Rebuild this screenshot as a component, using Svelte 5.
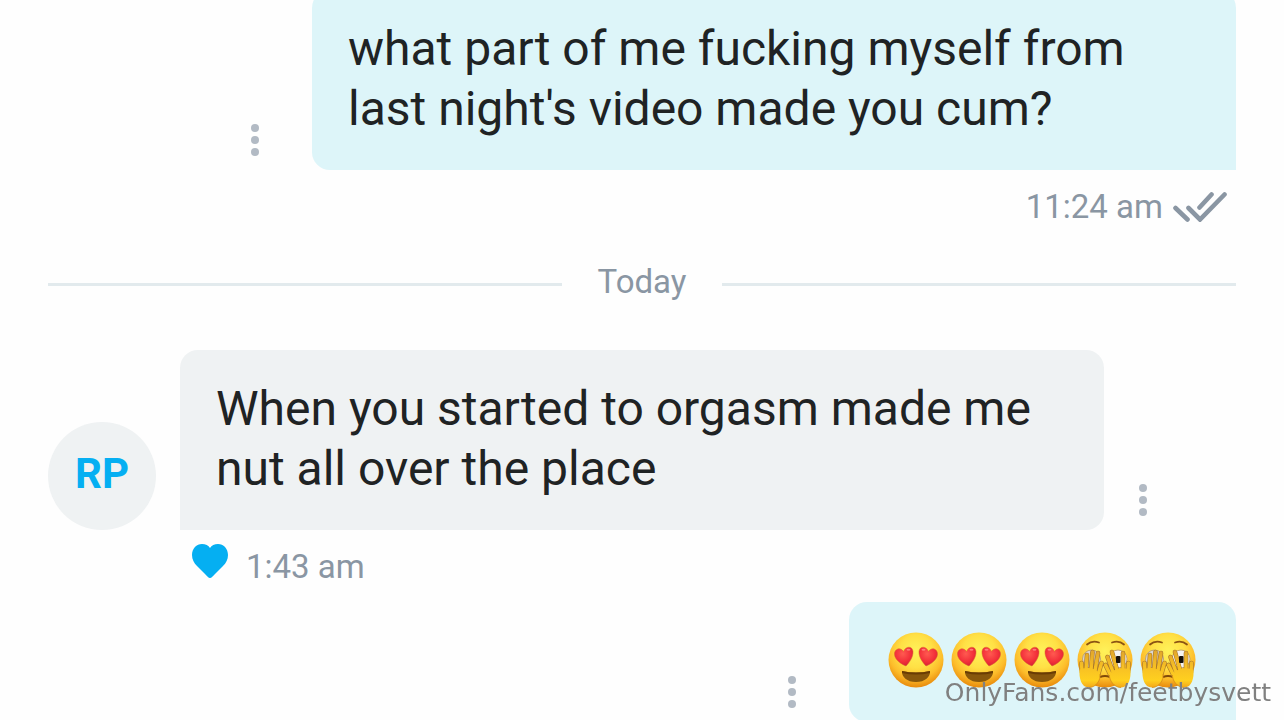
<script lang="ts">
  type Message = {
    id: number;
    from: 'me' | 'them';
    text?: string;
    emoji?: ('love' | 'peek')[];
    time?: string;
    liked?: boolean;
  };

  const earlier: Message[] = [
    {
      id: 1,
      from: 'me',
      text: "what part of me fucking myself from\nlast night's video made you cum?",
      time: '11:24 am'
    }
  ];

  const today: Message[] = [
    {
      id: 2,
      from: 'them',
      text: 'When you started to orgasm made me\nnut all over the place',
      time: '1:43 am',
      liked: true
    },
    { id: 3, from: 'me', emoji: ['love', 'love', 'love', 'peek', 'peek'] }
  ];

  const fingers =
    'M5 40L4.500 31M9 38L10 23M14 38L15.500 20M18 39L21 21M21 43L24.500 31M51 40L51.500 31M46 38L46 21M40 38L35 20M36 40L30.500 25M34 44L28.500 33';
</script>

<svg class="defs" aria-hidden="true">
  <defs>
    <radialGradient id="face" cx="0.5" cy="0.34" r="0.66">
      <stop offset="0" stop-color="#fff25a" />
      <stop offset="0.45" stop-color="#ffe045" />
      <stop offset="0.75" stop-color="#fdbd2b" />
      <stop offset="1" stop-color="#e88a0c" />
    </radialGradient>
    <linearGradient id="hand" x1="0" y1="18" x2="0" y2="56" gradientUnits="userSpaceOnUse">
      <stop offset="0" stop-color="#e0a52c" />
      <stop offset="0.45" stop-color="#f7c024" />
      <stop offset="0.8" stop-color="#ffd01f" />
      <stop offset="1" stop-color="#f2a51a" />
    </linearGradient>
    <radialGradient id="love" cx="0.45" cy="0.35" r="0.7">
      <stop offset="0" stop-color="#ff5a50" />
      <stop offset="0.6" stop-color="#f3303a" />
      <stop offset="1" stop-color="#d01f35" />
    </radialGradient>
  </defs>
</svg>

{#snippet loveFace()}
  <svg class="emoji" viewBox="0 0 56 56" role="img" aria-label="heart eyes">
    <circle cx="28" cy="28" r="27.500" fill="url(#face)" />
    <g fill="url(#love)" stroke="#d9662a" stroke-width="0.500">
      <path d="M18 34C13 32 7 28 6.500 22.500C6 17 12.500 14.500 15.500 19.500C17.500 14 24.500 13.500 25 19.500C25.400 25 21 31 18 34Z" />
      <path d="M38 34C43 32 49 28 49.500 22.500C50 17 43.500 14.500 40.500 19.500C38.500 14 31.500 13.500 31 19.500C30.600 25 35 31 38 34Z" />
    </g>
    <g fill="#ff9d8e" opacity="0.7">
      <ellipse cx="20.500" cy="17.800" rx="2" ry="1" />
      <ellipse cx="35.500" cy="17.800" rx="2" ry="1" />
    </g>
    <path d="M14 39Q28 42 42 39C42.500 45 37 50 28 50S13.500 45 14 39Z" fill="#87570c" />
    <path d="M14 39Q28 42 42 39L42 41Q28 44 14 41Z" fill="#693c04" />
  </svg>
{/snippet}

{#snippet peekFace()}
  <svg class="emoji" viewBox="0 0 56 56" role="img" aria-label="peeking through fingers">
    <circle cx="28" cy="28" r="27.500" fill="url(#face)" />
    <g fill="none" stroke="#8b5413" stroke-width="1.800" stroke-linecap="round">
      <path d="M10 12.500Q15 8 22 10.500" />
      <path d="M35 10.500Q42 8 47 12.500" />
    </g>
    <ellipse cx="14.500" cy="27" rx="9" ry="9" fill="#dcd8d2" stroke="#b3946c" stroke-width="0.800" />
    <ellipse cx="41" cy="27" rx="9" ry="9" fill="#f5f3f1" stroke="#b3946c" stroke-width="0.800" />
    <path d="M23 45Q28 43 33 45" fill="none" stroke="#804a09" stroke-width="2" />
    <g stroke-linecap="round" fill="none">
      <path d={fingers} stroke="#a8762a" stroke-width="4.600" />
      <path d={fingers} stroke="url(#hand)" stroke-width="3.400" />
    </g>
    <rect x="39" y="24" width="4.500" height="7" rx="1" fill="#17110d" />
    <g fill="url(#hand)">
      <path d="M2.500 38C6 35 19 35 22.500 42C24 48 19 55.500 12 55.500C4 55.500 2 46 2.500 38Z" />
      <path d="M53.500 38C50 35 36 35 32.500 43C32 48 37 55.500 44 55.500C52 55.500 54 46 53.500 38Z" />
    </g>
    <g fill="none" stroke="#d68d17" stroke-width="0.800">
      <path d="M23 42C24 48 19 55.500 12 55.500" />
      <path d="M32.500 43C32 48 37 55.500 44 55.500" />
    </g>
  </svg>
{/snippet}

{#snippet menu()}
  <button class="menu" aria-label="Message options">
    <svg viewBox="0 0 8 32" width="8" height="32">
      <circle cx="4" cy="4" r="4" />
      <circle cx="4" cy="16" r="4" />
      <circle cx="4" cy="28" r="4" />
    </svg>
  </button>
{/snippet}

{#snippet message(msg: Message)}
  <article class="message {msg.from}">
    <div class="row">
      {#if msg.from === 'them'}
        <div class="avatar">RP</div>
      {:else}
        {@render menu()}
      {/if}
      <div class="bubble" class:fit={msg.emoji}>
        {#if msg.emoji}
          <div class="emojis">
            {#each msg.emoji as kind}
              {#if kind === 'love'}{@render loveFace()}{:else}{@render peekFace()}{/if}
            {/each}
          </div>
        {:else}
          <p>{msg.text}</p>
        {/if}
      </div>
      {#if msg.from === 'them'}
        {@render menu()}
      {/if}
    </div>
    {#if msg.time}
      <footer>
        {#if msg.liked}
          <button class="like" aria-label="Unlike">
            <svg viewBox="0 0 36 34" width="36" height="34">
              <path d="M18 34C16.500 34 15 32 13 30L5 22C2 19 0 15.500 0 11C0 4.500 4.500 0 10 0C13.500 0 16.500 1.500 18 4C19.500 1.500 22.500 0 26 0C31.500 0 36 4.500 36 11C36 15.500 34 19 31 22L23 30C21 32 19.500 34 18 34Z" />
            </svg>
          </button>
        {/if}
        <time>{msg.time}</time>
        {#if msg.from === 'me'}
          <svg class="ticks" viewBox="0 0 54 32" width="54" height="32" role="img" aria-label="Read">
            <path d="M2.500 18L14.500 29.500M15.500 18L27 29.500L51.500 4.500M26.500 17.500L38.500 4.500" />
          </svg>
        {/if}
      </footer>
    {/if}
  </article>
{/snippet}

<main>
  {#each earlier as msg (msg.id)}
    {@render message(msg)}
  {/each}
  <div class="day"><span>Today</span></div>
  {#each today as msg (msg.id)}
    {@render message(msg)}
  {/each}
</main>
<div class="watermark">OnlyFans.com/feetbysvett</div>

<style>
  :global(body) {
    background: #fefefe;
    overflow: hidden;
  }

  .defs {
    position: absolute;
    width: 0;
    height: 0;
  }

  /* scrolled slightly past the top of the first bubble */
  main {
    margin-top: -10px;
    padding: 0 48px;
    font-family: Roboto, sans-serif;
    color: #1f2324;
  }

  .row {
    display: flex;
    align-items: flex-end;
  }

  .me .row {
    justify-content: flex-end;
    padding-left: 150px;
  }

  .them .row {
    padding-right: 54px;
  }

  .bubble {
    flex: 1;
    box-sizing: border-box;
    padding: 29px 36px 31px;
    border-radius: 18px;
  }

  .bubble.fit {
    flex: none;
    padding: 30px 36px;
  }

  .me .bubble {
    background: #ddf5f9;
    border-bottom-right-radius: 0;
  }

  .them .bubble {
    background: #eff2f3;
    border-bottom-left-radius: 0;
  }

  p {
    margin: 0;
    font-size: 48px;
    line-height: 60px;
    white-space: pre-line;
  }

  .avatar {
    width: 108px;
    height: 108px;
    margin-right: 24px;
    border-radius: 50%;
    background: #eff2f3;
    color: #05aff2;
    font-size: 42px;
    font-weight: 700;
    line-height: 104px;
    text-align: center;
  }

  button {
    padding: 0;
    border: 0;
    background: none;
    cursor: pointer;
  }

  .menu {
    display: flex;
    justify-content: center;
    align-items: center;
    width: 78px;
    height: 60px;
    fill: #b2bac4;
  }

  .me .menu {
    width: 114px;
  }

  .emojis {
    display: flex;
    height: 60px;
  }

  .emoji {
    width: 56px;
    height: 56px;
    padding: 0 4px 0 3px;
  }

  footer {
    display: flex;
    align-items: center;
    height: 72px;
    color: #8a96a3;
    font-size: 33px;
  }

  .me footer {
    justify-content: flex-end;
    gap: 10px;
    padding-right: 9px;
  }

  .them footer {
    gap: 18px;
    padding-left: 144px;
  }

  .like {
    display: flex;
    align-items: flex-start;
    height: 44px;
    fill: #05aff2;
  }

  .ticks {
    fill: none;
    stroke: #8a96a3;
    stroke-width: 4.6;
    stroke-linecap: round;
  }

  .day {
    display: flex;
    align-items: center;
    gap: 36px;
    padding: 20px 0 44px;
    color: #8a96a3;
    font-size: 33px;
    line-height: 40px;
  }

  .day span {
    padding-bottom: 4px;
  }

  .day::before,
  .day::after {
    content: '';
    flex: 1;
    height: 3px;
    background: #e2eaed;
  }

  .watermark {
    position: fixed;
    right: 13px;
    bottom: 12px;
    color: #808080;
    font-family: 'DejaVu Sans', sans-serif;
    font-size: 25px;
    line-height: 30px;
  }
</style>
